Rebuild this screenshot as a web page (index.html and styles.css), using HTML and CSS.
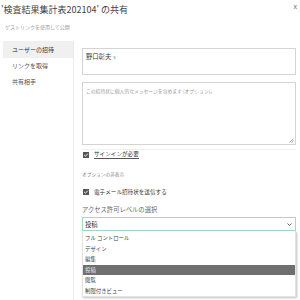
FILE: index.html
```html
<!DOCTYPE html>
<html lang="ja">
<head>
  <meta charset="UTF-8">
  <meta name="viewport" content="width=device-width, initial-scale=1.0">
  <title>共有</title>
  <link rel="stylesheet" href="styles.css">
</head>
<body>

  <div class="dialog">
    <header class="head">
      <h1 class="title">'検査結果集計表202104' の共有</h1>
      <span class="close">x</span>
    </header>
    <p class="subtitle">ゲストリンクを使用して公開</p>

    <div class="body">
      <nav class="side">
        <div class="side-item active">ユーザーの招待</div>
        <div class="side-item">リンクを取得</div>
        <div class="side-item">共有相手</div>
      </nav>

      <main class="main">
        <div class="people">
          <span class="person">野口彰夫</span><span class="remove">x</span>
        </div>

        <div class="message">
          この招待状に個人的なメッセージを含めます (オプション)。
          <svg class="grip" width="5" height="5" viewBox="0 0 5 5">
            <path d="M4.5 0.5 L0.5 4.5 M4.5 2.5 L2.5 4.5" stroke="#777" stroke-width="0.7" fill="none"/>
          </svg>
        </div>

        <div class="sep"></div>

        <div class="check">
          <svg class="box" width="6" height="6" viewBox="0 0 6 6">
            <rect width="6" height="6" fill="#555"/>
            <path d="M1.2 3 L2.5 4.3 L4.8 1.6" stroke="#fff" stroke-width="0.9" fill="none"/>
          </svg>
          <span class="link">サインインが必要</span>
        </div>

        <p class="hint">オプションの非表示</p>

        <div class="check">
          <svg class="box" width="6" height="6" viewBox="0 0 6 6">
            <rect width="6" height="6" fill="#555"/>
            <path d="M1.2 3 L2.5 4.3 L4.8 1.6" stroke="#fff" stroke-width="0.9" fill="none"/>
          </svg>
          <span>電子メール招待状を送信する</span>
        </div>

        <p class="field-label">アクセス許可レベルの選択</p>

        <div class="select">
          <span>投稿</span>
          <svg class="chevron" width="5" height="3" viewBox="0 0 5 3">
            <path d="M0.5 0.5 L2.5 2.5 L4.5 0.5" stroke="#444" stroke-width="0.8" fill="none"/>
          </svg>
        </div>

        <ul class="options">
          <li>フル コントロール</li>
          <li>デザイン</li>
          <li>編集</li>
          <li class="selected">投稿</li>
          <li>閲覧</li>
          <li>制限付きビュー</li>
        </ul>
      </main>
    </div>
  </div>

</body>
</html>
```

FILE: styles.css
```css
body {
  margin: 0;
  background: #fff;
  font-family: "Noto Sans CJK JP", "Noto Sans", sans-serif;
  color: #333;
}
.dialog {
  width: 300px;
  height: 300px;
  overflow: hidden;
}
.head {
  display: flex;
  justify-content: space-between;
  align-items: flex-start;
  height: 22px;
}
.title {
  margin: 3px 0 0 1px;
  font-size: 9px;
  font-weight: normal;
  line-height: 14px;
  color: #444;
}
.close {
  margin: 2px 3px 0 0;
  font-size: 7px;
  line-height: 8px;
  color: #666;
}
.subtitle {
  margin: 0 0 0 5px;
  height: 18px;
  font-size: 5px;
  line-height: 10px;
  color: #999;
}
.body {
  display: flex;
  height: 260px;
}
/* left navigation */
.side {
  width: 70px;
  padding: 1px 0 0 3px;
  border-right: 1px solid #ececec;
}
.side-item {
  height: 16px;
  padding-left: 9px;
  font-size: 6px;
  line-height: 16px;
  color: #555;
}
.side-item.active {
  height: 17px;
  line-height: 17px;
  background: #f0f0f0;
  color: #333;
}
.main {
  flex: 1;
  padding: 8px 4px 0 8px;
}
.people {
  padding: 3px 3px 0;
  border: 1px solid #d4d4d4;
  box-sizing: border-box;
  height: 27px;
  font-size: 6.3px;
  line-height: 10px;
}
.person {
  color: #333;
}
.remove {
  margin-left: 2px;
  font-size: 5px;
  color: #4aa37c;
}
.message {
  position: relative;
  margin-top: 7px;
  height: 63px;
  box-sizing: border-box;
  padding: 4px 3px;
  border: 1px solid #d4d4d4;
  font-size: 4.8px;
  line-height: 8px;
  color: #999;
}
.grip {
  position: absolute;
  right: 1px;
  bottom: 1px;
}
.sep {
  margin-top: 4px;
  height: 1px;
  background: #f0f0f0;
}
.check {
  display: flex;
  align-items: center;
  height: 10px;
  padding-left: 1px;
  font-size: 5.6px;
  color: #333;
}
.check + .hint {
  margin-top: 9px;
}
.box {
  margin-right: 5px;
}
.link {
  border-bottom: 0.5px solid #555;
  line-height: 7px;
}
.hint {
  margin: 0 0 8px;
  height: 10px;
  font-size: 4.7px;
  line-height: 10px;
  color: #888;
}
.field-label {
  margin: 8px 0 2px;
  height: 10px;
  font-size: 6.3px;
  line-height: 10px;
  color: #666;
}
.select {
  display: flex;
  justify-content: space-between;
  align-items: center;
  height: 14px;
  box-sizing: border-box;
  padding: 0 3px 0 2px;
  border: 1px solid #a5d8c6;
  font-size: 6.3px;
  color: #333;
}
.options {
  list-style: none;
  margin: 0;
  padding: 2px 0 3px;
  height: 66px;
  box-sizing: border-box;
  border: 1px solid #e2e2e2;
  border-top: none;
  box-shadow: 1px 1px 2px rgba(0, 0, 0, 0.25);
}
.options li {
  height: 10.5px;
  padding-left: 2px;
  font-size: 5.4px;
  line-height: 10.5px;
  color: #444;
}
.options li.selected {
  background: #6f6f6f;
  color: #e8e8e8;
}
```
